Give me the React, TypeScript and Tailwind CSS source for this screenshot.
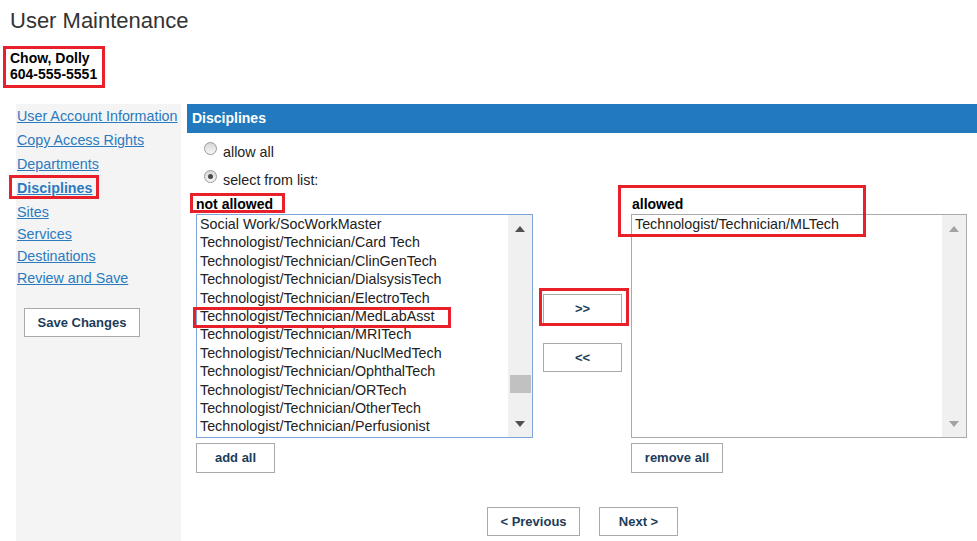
import React from "react";

const notAllowed = [
  "Social Work/SocWorkMaster",
  "Technologist/Technician/Card Tech",
  "Technologist/Technician/ClinGenTech",
  "Technologist/Technician/DialsysisTech",
  "Technologist/Technician/ElectroTech",
  "Technologist/Technician/MedLabAsst",
  "Technologist/Technician/MRITech",
  "Technologist/Technician/NuclMedTech",
  "Technologist/Technician/OphthalTech",
  "Technologist/Technician/ORTech",
  "Technologist/Technician/OtherTech",
  "Technologist/Technician/Perfusionist",
];

const navLinks = [
  { label: "User Account Information", h: "h-[24px]" },
  { label: "Copy Access Rights", h: "h-[24px]" },
  { label: "Departments", h: "h-[24px]" },
  { label: "Disciplines", h: "h-[24px]", active: true },
  { label: "Sites", h: "h-[23px]" },
  { label: "Services", h: "h-[22px]" },
  { label: "Destinations", h: "h-[22px]" },
  { label: "Review and Save", h: "h-[22px]" },
];

const Arrow = ({ up, color }: { up?: boolean; color: string }) => (
  <svg width="10" height="6" viewBox="0 0 10 6">
    <polygon points={up ? "0,6 10,6 5,0" : "0,0 10,0 5,6"} fill={color} />
  </svg>
);

const Scrollbar = ({ thumb, color }: { thumb?: boolean; color: string }) => (
  <div className="relative flex w-[24px] flex-col items-center justify-between bg-[#f0f0f0] pt-[11px] pb-[10px]">
    <Arrow up color={color} />
    {thumb && <div className="absolute left-[2px] top-[160px] h-[18px] w-[21px] bg-[#c1c1c1]" />}
    <Arrow color={color} />
  </div>
);

const Radio = ({ checked, label }: { checked?: boolean; label: string }) => (
  <div className="flex h-[28px] items-start pl-[8px]">
    <div className="mt-[4px] flex h-[13px] w-[13px] items-center justify-center rounded-full border border-[#9a9a9a] bg-gradient-to-b from-[#d6d6d6] to-[#f8f8f8]">
      {checked && <div className="h-[5px] w-[5px] rounded-full bg-[#4a4a4a]" />}
    </div>
    <span className="ml-[6px] mt-[6px] text-[14.3px] leading-[16px] text-[#222]">{label}</span>
  </div>
);

const Btn = ({ children, className }: { children: React.ReactNode; className: string }) => (
  <button className={`border border-[#a9a9a9] bg-white text-[13px] font-bold text-[#1c3d5a] ${className}`}>
    {children}
  </button>
);

const RedBox = ({ className }: { className: string }) => (
  <div className={`pointer-events-none absolute border-[3px] border-[#e8202a] ${className}`} />
);

export default function App() {
  return (
    <div className="flex h-[541px] w-[977px] flex-col overflow-hidden bg-white font-['Liberation_Sans',Arial,sans-serif]">
      <h1 className="pl-[10px] pt-[8px] text-[22px] leading-[26px] text-[#333]">User Maintenance</h1>

      <div className="ml-[3px] mt-[12px] h-[42px] w-[102px] border-[3px] border-[#e8202a] pl-[4px] pt-[1px] text-[14px] font-bold leading-[16px] text-black">
        <div>Chow, Dolly</div>
        <div>604-555-5551</div>
      </div>

      <div className="mt-[16px] flex flex-1">
        <aside className="ml-[16px] w-[165px] bg-[#f4f4f4]">
          {navLinks.map((l) => (
            <div key={l.label} className={`relative flex items-center pl-[1px] ${l.h}`}>
              <a
                href="#"
                className={`text-[14.3px] leading-[16px] text-[#2a7ac0] underline ${l.active ? "font-bold" : ""}`}
              >
                {l.label}
              </a>
              {l.active && <RedBox className="-left-[7px] -top-[1px] h-[24px] w-[90px]" />}
            </div>
          ))}
          <Btn className="ml-[8px] mt-[19px] h-[29px] w-[116px]">Save Changes</Btn>
        </aside>

        <main className="ml-[6px] flex flex-1 flex-col">
          <div className="flex h-[29px] items-center bg-[#2379bd] pl-[5px] text-[14px] font-bold text-white">
            Disciplines
          </div>

          <div className="pl-[9px] pt-[5px]">
            <Radio label="allow all" />
            <Radio checked label="select from list:" />

            <div className="mt-[2px] flex">
              {/* not allowed */}
              <div className="flex w-[337px] flex-col">
                <div className="relative text-[14px] font-bold leading-[16px] text-black">
                  not allowed
                  <RedBox className="-left-[6px] -top-[3px] h-[20px] w-[95px]" />
                </div>
                <div className="relative mt-[2px] flex h-[224px] border border-[#7ea6d8]">
                  <div className="flex-1 pl-[3px] text-[14.3px] leading-[18.4px] text-[#222]">
                    {notAllowed.map((d) => (
                      <div key={d} className="whitespace-nowrap">{d}</div>
                    ))}
                  </div>
                  <Scrollbar thumb color="#505050" />
                  <RedBox className="-left-[4px] top-[92px] h-[21px] w-[258px]" />
                </div>
                <Btn className="mt-[5px] h-[30px] w-[79px]">add all</Btn>
              </div>

              {/* move buttons */}
              <div className="flex w-[98px] flex-col pl-[10px] pt-[98px]">
                <div className="relative">
                  <Btn className="h-[30px] w-[79px]">&gt;&gt;</Btn>
                  <RedBox className="-left-[4px] -top-[6px] h-[38px] w-[90px]" />
                </div>
                <Btn className="mt-[19px] h-[29px] w-[79px]">&lt;&lt;</Btn>
              </div>

              {/* allowed */}
              <div className="relative flex w-[336px] flex-col">
                <div className="pl-[1px] text-[14px] font-bold leading-[16px] text-black">allowed</div>
                <div className="mt-[2px] flex h-[224px] border border-[#aaaaaa]">
                  <div className="flex-1 pl-[3px] text-[14.3px] leading-[18.4px] text-[#222]">
                    Technologist/Technician/MLTech
                  </div>
                  <Scrollbar color="#a3a3a3" />
                </div>
                <Btn className="mt-[5px] h-[30px] w-[92px]">remove all</Btn>
                <RedBox className="-left-[13px] -top-[11px] h-[52px] w-[248px]" />
              </div>
            </div>

            <div className="mt-[34px] flex pl-[291px]">
              <Btn className="h-[29px] w-[93px]">&lt; Previous</Btn>
              <Btn className="ml-[19px] h-[29px] w-[79px]">Next &gt;</Btn>
            </div>
          </div>
        </main>
      </div>
    </div>
  );
}
